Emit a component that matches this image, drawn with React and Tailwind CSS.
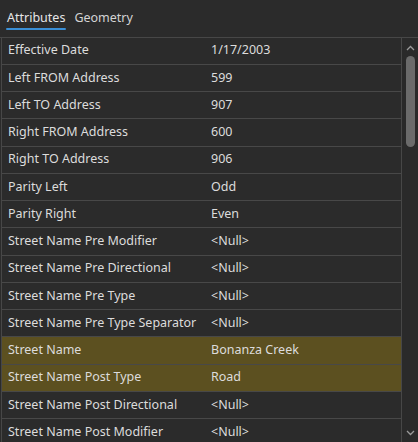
import React from 'react'

const rows = [
    ['Effective Date', '1/17/2003'],
    ['Left FROM Address', '599'],
    ['Left TO Address', '907'],
    ['Right FROM Address', '600'],
    ['Right TO Address', '906'],
    ['Parity Left', 'Odd'],
    ['Parity Right', 'Even'],
    ['Street Name Pre Modifier', '<Null>'],
    ['Street Name Pre Directional', '<Null>'],
    ['Street Name Pre Type', '<Null>'],
    ['Street Name Pre Type Separator', '<Null>'],
    ['Street Name', 'Bonanza Creek', true],
    ['Street Name Post Type', 'Road', true],
    ['Street Name Post Directional', '<Null>'],
    ['Street Name Post Modifier', '<Null>'],
]

const App = () => {
    return (
        <div
            className="w-[418px] h-[442px] overflow-hidden bg-[#2b2b2b] text-[#dcdcdc] flex flex-col"
            style={{ fontFamily: '"Noto Sans", "Open Sans", sans-serif' }}
        >
            <div className="h-[37.5px] flex items-start gap-[9px] px-[7px] pt-[9px] border-b border-[#474747] shrink-0">
                <div className="flex flex-col">
                    <span className="text-[12.5px] leading-[18px] text-[#e6e6e6]">Attributes</span>
                    <div className="h-[2px] mt-[1px] -mx-[1px] bg-[#3a8fd6] rounded-full" />
                </div>
                <span className="text-[12.5px] leading-[18px] text-[#d4d4d4]">Geometry</span>
            </div>
            <div className="flex flex-1 min-h-0">
                <div className="flex-1 border-l border-[#474747] ml-[1px] overflow-hidden">
                    {rows.map(([label, value, hl]) => (
                        <div
                            key={label}
                            className={`h-[27.25px] flex items-center border-b border-[#484848] text-[12.5px] ${
                                hl ? 'bg-[#5c5020]' : ''
                            }`}
                        >
                            <span className="w-[203px] pl-[6px] whitespace-nowrap">{label}</span>
                            <span className="pl-[6px] whitespace-nowrap">{value}</span>
                        </div>
                    ))}
                </div>
                <div className="w-[17px] border-l border-[#474747] flex flex-col items-center bg-[#2a2a2a] shrink-0">
                    <svg width="9" height="6" viewBox="0 0 9 6" className="mt-[7px]">
                        <path d="M1 5 L4.5 1.5 L8 5" stroke="#9a9a9a" strokeWidth="1.3" fill="none" />
                    </svg>
                    <div className="w-[9px] h-[91px] mt-[5px] rounded-full bg-[#6b6b6b]" />
                    <div className="flex-1" />
                    <svg width="9" height="6" viewBox="0 0 9 6" className="mb-[6px]">
                        <path d="M1 1 L4.5 4.5 L8 1" stroke="#9a9a9a" strokeWidth="1.3" fill="none" />
                    </svg>
                </div>
            </div>
        </div>
    )
}

export default App
